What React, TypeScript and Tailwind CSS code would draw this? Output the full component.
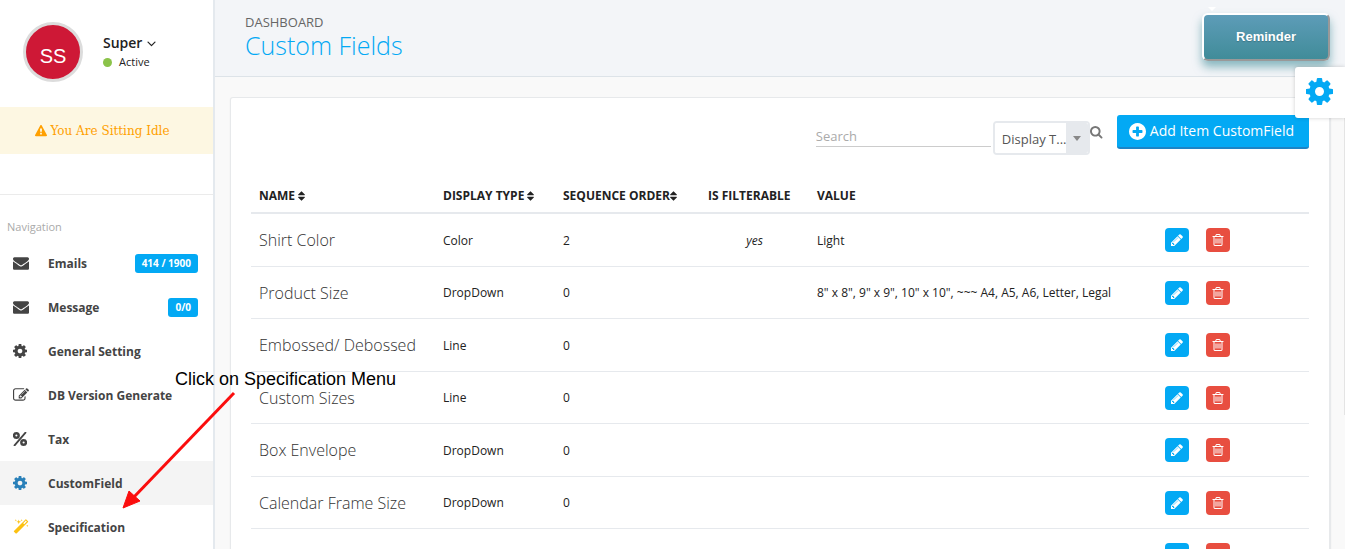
import type { ReactNode } from "react";

const paths = {
  cog: "M1152 896q0-106-75-181t-181-75-181 75-75 181 75 181 181 75 181-75 75-181zm512-109v222q0 12-8 23t-20 13l-185 28q-19 54-39 91 35 50 107 138 10 12 10 25t-9 23q-27 37-99 108t-94 71q-12 0-26-9l-138-108q-44 23-91 38-16 136-29 186-7 28-36 28h-222q-14 0-24.5-8.5t-11.5-21.5l-28-184q-49-16-90-37l-141 107q-10 9-25 9-14 0-25-11-126-114-165-168-7-10-7-23 0-12 8-23 15-21 51-66.5t54-70.5q-27-50-41-99l-183-27q-13-2-21-12.5t-8-23.5v-222q0-12 8-23t19-13l186-28q14-46 39-92-40-57-107-138-10-12-10-24 0-10 9-23 26-36 98.5-107.5t94.5-71.5q13 0 26 10l138 107q44-23 91-38 16-136 29-186 7-28 36-28h222q14 0 24.5 8.5t11.5 21.5l28 184q49 16 90 37l142-107q9-9 24-9 13 0 25 10 129 119 165 170 7 8 7 22 0 12-8 23-15 21-51 66.5t-54 70.5q26 50 41 98l183 28q13 2 21 12.5t8 23.5z",
  envelope:
    "M1792 710v794q0 66-47 113t-113 47h-1472q-66 0-113-47t-47-113v-794q44 49 101 87 362 246 497 345 57 42 92.5 65.5t94.5 48 110 24.5h2q51 0 110-24.5t94.5-48 92.5-65.5q170-123 498-345 57-39 100-87zm0-294q0 79-49 151t-122 123q-376 261-468 325-10 7-42.5 31t-54 38.5-52 32.5-57.5 27-50 9h-2q-23 0-50-9t-57.5-27-52-32.5-54-38.5-42.5-31q-91-64-262-182.5t-205-142.5q-62-42-117-115.5t-55-136.5q0-78 41.5-130t118.5-52h1472q65 0 112.5 47t47.5 113z",
  pencil:
    "M491 1536l91-91-235-235-91 91v107h128v128h107zm523-928q0-22-22-22-10 0-17 7l-542 542q-7 7-7 17 0 22 22 22 10 0 17-7l542-542q7-7 7-17zm-54-192l416 416-832 832h-416v-416zm683 96q0 53-37 90l-166 166-416-416 166-165q36-38 90-38 53 0 91 38l235 234q37 39 37 91z",
  trash:
    "M704 736v576q0 14-9 23t-23 9h-64q-14 0-23-9t-9-23v-576q0-14 9-23t23-9h64q14 0 23 9t9 23zm256 0v576q0 14-9 23t-23 9h-64q-14 0-23-9t-9-23v-576q0-14 9-23t23-9h64q14 0 23 9t9 23zm256 0v576q0 14-9 23t-23 9h-64q-14 0-23-9t-9-23v-576q0-14 9-23t23-9h64q14 0 23 9t9 23zm128 724v-948h-896v948q0 22 7 40.5t14.5 27 10.5 8.5h832q3 0 10.5-8.5t14.5-27 7-40.5zm-672-1076h448l-48-117q-7-9-17-11h-317q-10 2-17 11zm928 32v64q0 14-9 23t-23 9h-96v948q0 83-47 143.5t-113 60.5h-832q-66 0-113-58.5t-47-141.5v-952h-96q-14 0-23-9t-9-23v-64q0-14 9-23t23-9h309l70-167q15-37 54-63t79-26h320q40 0 79 26t54 63l70 167h309q14 0 23 9t9 23z",
  edit: "M888 1184l116-116-152-152-116 116v56h96v96h56zm440-720q-16-16-33 1l-350 350q-17 17-1 33t33-1l350-350q17-17 1-33zm80 594v190q0 119-84.5 203.5t-203.5 84.5h-832q-119 0-203.5-84.5t-84.5-203.5v-832q0-119 84.5-203.5t203.5-84.5h832q63 0 117 25 15 7 18 23 3 17-9 29l-49 49q-14 14-32 8-23-6-45-6h-832q-66 0-113 47t-47 113v832q0 66 47 113t113 47h832q66 0 113-47t47-113v-126q0-13 9-22l64-64q15-15 35-7t20 29zm-96-738l288 288-672 672h-288v-288zm444 132l-92 92-288-288 92-92q28-28 68-28t68 28l152 152q28 28 28 68t-28 68z",
  search:
    "M1216 832q0-185-131.5-316.5t-316.5-131.5-316.5 131.5-131.5 316.5 131.5 316.5 316.5 131.5 316.5-131.5 131.5-316.5zm512 832q0 52-38 90t-90 38q-54 0-90-38l-343-342q-179 124-399 124-143 0-273.5-55.5t-225-150-150-225-55.5-273.5 55.5-273.5 150-225 225-150 273.5-55.5 273.5 55.5 225 150 150 225 55.5 273.5q0 220-124 399l343 343q37 37 37 90z",
  plus: "M1344 960v-128q0-26-19-45t-45-19h-256v-256q0-26-19-45t-45-19h-128q-26 0-45 19t-19 45v256h-256q-26 0-45 19t-19 45v128q0 26 19 45t45 19h256v256q0 26 19 45t45 19h128q26 0 45-19t19-45v-256h256q26 0 45-19t19-45zm320-64q0 209-103 385.5t-279.5 279.5-385.5 103-385.5-103-279.5-279.5-103-385.5 103-385.5 279.5-279.5 385.5-103 385.5 103 279.5 279.5 103 385.5z",
  warning:
    "M1024 1375v-190q0-14-9.5-23.5t-22.5-9.5h-192q-13 0-22.5 9.5t-9.5 23.5v190q0 14 9.5 23.5t22.5 9.5h192q13 0 22.5-9.5t9.5-23.5zm-2-374l18-459q0-12-10-19-13-11-24-11h-220q-11 0-24 11-10 7-10 21l17 457q0 10 10 16.5t24 6.5h185q14 0 23.5-6.5t10.5-16.5zm-14-934l768 1408q35 63-2 126-17 29-46.5 46t-63.5 17h-1536q-34 0-63.5-17t-46.5-46q-37-63-2-126l768-1408q17-31 47-49t65-18 65 18 47 49z",
  angleDown:
    "M1395 736q0 13-10 23l-466 466q-10 10-23 10t-23-10l-466-466q-10-10-10-23t10-23l50-50q10-10 23-10t23 10l393 393 393-393q10-10 23-10t23 10l50 50q10 10 10 23z",
  sort: "M1408 1088q0 26-19 45l-448 448q-19 19-45 19t-45-19l-448-448q-19-19-19-45t19-45 45-19h896q26 0 45 19t19 45zm0-384q0 26-19 45t-45 19h-896q-26 0-45-19t-19-45 19-45l448-448q19-19 45-19t45 19l448 448q19 19 19 45z",
  magic:
    "M1254 581l293-293-107-107-293 293zm447-293q0 27-18 45l-1286 1286q-18 18-45 18t-45-18l-198-198q-18-18-18-45t18-45l1286-1286q18-18 45-18t45 18l198 198q18 18 18 45zm-1351-190l98 30-98 30-30 98-30-98-98-30 98-30 30-98zm350 162l196 60-196 60-60 196-60-196-196-60 196-60 60-196zm930 478l98 30-98 30-30 98-30-98-98-30 98-30 30-98zm-640-640l98 30-98 30-30 98-30-98-98-30 98-30 30-98z",
};

function Icon({
  name,
  className,
  viewBox = "0 0 1792 1792",
}: {
  name: keyof typeof paths;
  className: string;
  viewBox?: string;
}) {
  return (
    <svg viewBox={viewBox} fill="currentColor" className={className} aria-hidden="true">
      <path d={paths[name]} />
    </svg>
  );
}

function PercentIcon() {
  return (
    <svg viewBox="0 0 1536 1536" className="size-[14px]" fill="none" stroke="currentColor" aria-hidden="true">
      <circle cx="370" cy="390" r="250" strokeWidth="270" />
      <circle cx="1166" cy="1146" r="250" strokeWidth="270" />
      <path d="M1370 70L170 1470" strokeWidth="200" strokeLinecap="round" />
    </svg>
  );
}

type NavItem = { label: string; icon: ReactNode; badge?: string; active?: boolean };

const CROPPED = "128 128 1536 1536";

const navItems: NavItem[] = [
  { label: "Emails", icon: <Icon name="envelope" className="size-4" />, badge: "414 / 1900" },
  { label: "Message", icon: <Icon name="envelope" className="size-4" />, badge: "0/0" },
  { label: "General Setting", icon: <Icon name="cog" viewBox={CROPPED} className="size-[14px]" /> },
  { label: "DB Version Generate", icon: <Icon name="edit" className="size-4" /> },
  { label: "Tax", icon: <PercentIcon /> },
  {
    label: "CustomField",
    icon: <Icon name="cog" viewBox={CROPPED} className="size-[14px] text-[#2980b9]" />,
    active: true,
  },
  { label: "Specification", icon: <Icon name="magic" className="size-4 text-[#fcc111]" /> },
];

type Field = { name: string; type: string; order: string; filterable?: string; value?: string };

const fields: Field[] = [
  { name: "Shirt Color", type: "Color", order: "2", filterable: "yes", value: "Light" },
  {
    name: "Product Size",
    type: "DropDown",
    order: "0",
    value: '8" x 8", 9" x 9", 10" x 10", ~~~ A4, A5, A6, Letter, Legal',
  },
  { name: "Embossed/ Debossed", type: "Line", order: "0" },
  { name: "Custom Sizes", type: "Line", order: "0" },
  { name: "Box Envelope", type: "DropDown", order: "0" },
  { name: "Calendar Frame Size", type: "DropDown", order: "0" },
  { name: "", type: "", order: "" },
];

function Sidebar() {
  return (
    <aside className="flex w-[215px] shrink-0 flex-col border-r-2 border-[#e4e9ee] bg-white">
      <div className="flex h-[107px] items-start gap-5 px-[23px] pt-[22px]">
        <div className="flex size-[60px] shrink-0 items-center justify-center rounded-full border-[3px] border-[#dcdcdc] bg-[#ce1836] pt-2 font-['Liberation_Sans',sans-serif] text-xl text-white">
          SS
        </div>
        <div className="pt-[11px]">
          <button type="button" className="flex items-center gap-0.5 text-sm leading-5 font-semibold text-[#222]">
            Super
            <Icon name="angleDown" className="size-[15px]" />
          </button>
          <div className="flex items-center gap-[7px] pt-px text-[11px] leading-4 text-[#222]">
            <span className="size-[9px] rounded-full bg-[#8bc34a]" />
            Active
          </div>
        </div>
      </div>
      <div className="flex h-[47px] shrink-0 items-center justify-center gap-[3px] bg-[#fdf7e2] pr-2 font-['DejaVu_Serif',serif] text-xs text-[#ffa000]">
        <Icon name="warning" className="size-3" />
        You Are Sitting Idle
      </div>
      <div className="h-[41px] shrink-0 border-b border-[#ebebeb]" />
      <nav aria-label="Navigation">
        <h2 className="h-[46px] pt-6 pl-[7px] text-[11px] leading-4 text-[#aaa]">Navigation</h2>
        <ul>
          {navItems.map((item) => (
            <li key={item.label}>
              <a
                href="#"
                className={
                  item.active
                    ? "flex h-11 items-center bg-[#f4f4f4] pr-[15px] pl-[13px] text-xs font-bold text-[#444]"
                    : "flex h-11 items-center pr-[15px] pl-[13px] text-xs font-bold text-[#444]"
                }
              >
                <span className="w-[35px] shrink-0">{item.icon}</span>
                <span className="grow pt-0.5 whitespace-nowrap">{item.label}</span>
                {item.badge && (
                  <span className="rounded-[3px] bg-[#03a9f4] px-[7px] text-[10px] leading-[19px] text-white">
                    {item.badge}
                  </span>
                )}
              </a>
            </li>
          ))}
        </ul>
      </nav>
    </aside>
  );
}

function Toolbar() {
  return (
    <div className="flex h-[58px] items-start justify-end">
      <input
        type="text"
        aria-label="Search"
        placeholder="Search"
        className="mt-2.5 h-[22px] w-[175px] border-b border-[#ccc] text-[13px] text-[#444] outline-none placeholder:text-[#aaa]"
      />
      <div className="relative mt-[6px] ml-[2px] h-[34px] w-[97px] overflow-hidden rounded border-2 border-[#e6e9ed]">
        <select
          aria-label="Display type"
          className="h-full w-full appearance-none bg-white pt-1 pl-[7px] text-[13px] text-[#555] outline-none"
        >
          <option>Display T...</option>
        </select>
        <span className="pointer-events-none absolute inset-y-0 right-0 flex w-[22px] items-center justify-center bg-[#e6e9ed]">
          <svg viewBox="0 0 8 5" className="h-[5px] w-2 fill-[#888]" aria-hidden="true">
            <path d="M0 0h8L4 5z" />
          </svg>
        </span>
      </div>
      <button type="button" aria-label="Search" className="mt-[11px] text-[#777]">
        <Icon name="search" viewBox="64 128 1728 1728" className="size-[13px]" />
      </button>
      <button
        type="button"
        className="ml-[14px] flex h-[34px] items-center gap-1 rounded-[3px] border-b-2 border-[#1c84c6] bg-[#03a9f4] pr-[15px] pl-3 text-sm text-white"
      >
        <Icon name="plus" viewBox={CROPPED} className="size-[17px]" />
        Add Item CustomField
      </button>
    </div>
  );
}

function SortIcon() {
  return <Icon name="sort" viewBox="384 0 1024 1792" className="inline h-3 w-[7px]" />;
}

function FieldsTable() {
  return (
    <table className="w-full table-fixed border-collapse text-left text-xs text-[#222]">
      <colgroup>
        <col className="w-[184px]" />
        <col className="w-[120px]" />
        <col className="w-[145px]" />
        <col className="w-[109px]" />
        <col />
        <col className="w-[152px]" />
      </colgroup>
      <thead>
        <tr className="h-9 border-b-2 border-[#e6e9ed] whitespace-nowrap">
          <th className="px-2 pt-0.5">
            NAME <SortIcon />
          </th>
          <th className="px-2 pt-0.5">
            DISPLAY TYPE <SortIcon />
          </th>
          <th className="px-2 pt-0.5">
            SEQUENCE ORDER
            <SortIcon />
          </th>
          <th className="px-2 pt-0.5">IS FILTERABLE</th>
          <th className="px-2 pt-0.5">VALUE</th>
          <th aria-label="Actions" />
        </tr>
      </thead>
      <tbody>
        {fields.map((f, i) => (
          <tr key={i} className="border-b border-[#e6e9ed] odd:h-[53px] even:h-[52px]">
            <td className="px-2 pt-px text-base font-light whitespace-nowrap text-[#333]">{f.name}</td>
            <td className="px-2 pt-0.5">{f.type}</td>
            <td className="px-2 pt-0.5">{f.order}</td>
            <td className="px-2 pt-0.5 text-center italic">{f.filterable}</td>
            <td className="px-2 pt-0.5 whitespace-nowrap">{f.value}</td>
            <td className="px-2 pt-px">
              <div className="flex gap-[17px]">
                <button
                  type="button"
                  aria-label="Edit"
                  className="flex size-6 items-center justify-center rounded bg-[#03a9f4] text-white"
                >
                  <Icon name="pencil" className="size-[14px]" />
                </button>
                <button
                  type="button"
                  aria-label="Delete"
                  className="flex size-6 items-center justify-center rounded bg-[#e84e40] text-white"
                >
                  <Icon name="trash" className="size-[14px]" />
                </button>
              </div>
            </td>
          </tr>
        ))}
      </tbody>
    </table>
  );
}

export default function App() {
  return (
    <div className="relative flex h-screen overflow-hidden bg-[#f9f9f9] font-['Open_Sans',sans-serif]">
      <Sidebar />
      <div className="flex min-w-0 grow flex-col">
        <header className="flex h-[77px] shrink-0 items-start justify-between border-b border-[#dde3e8] bg-[#f3f5f8] pr-[15px] pl-[30px]">
          <div className="pt-3.5">
            <p className="text-[13px] leading-4 text-[#666]">DASHBOARD</p>
            <h1 className="text-[25px] leading-[30px] font-light text-[#03a9f4]">Custom Fields</h1>
          </div>
          <div className="relative pt-[13px]">
            <svg viewBox="0 0 8 4" className="absolute top-[7px] left-[6px] h-1 w-2 fill-white" aria-hidden="true">
              <path d="M0 0h8L4 4z" />
            </svg>
            <button
              type="button"
              className="h-12 w-[128px] rounded-md border-2 border-t-white border-r-[#999] border-b-[#999] border-l-white bg-linear-to-b from-[#5d9cb8] to-[#408c99] font-['Liberation_Sans',sans-serif] text-[13px] font-bold text-white shadow-[0_6px_10px_#408c9999] text-shadow-xs"
            >
              Reminder
            </button>
          </div>
        </header>
        <main className="pt-5 pr-[14px] pl-[15px]">
          <section className="rounded-[3px] border border-r-2 border-[#e7e9eb] bg-white px-5 pt-[17px] shadow-xs">
            <Toolbar />
            <div className="pt-1">
              <FieldsTable />
            </div>
          </section>
        </main>
      </div>

      <div className="absolute top-[67px] right-0 h-[348px] w-px bg-[#e4e4e4]" />
      <button
        type="button"
        aria-label="Settings"
        className="absolute top-[67px] right-0 flex h-[51px] w-[50px] items-center justify-center rounded-l-[3px] bg-white pr-0.5 pb-0.5 text-[#03a9f4] shadow-[0_0_4px_#0000002e]"
      >
        <Icon name="cog" viewBox={CROPPED} className="size-[27px]" />
      </button>

      <div className="pointer-events-none absolute top-[368px] left-[175px] flex flex-col font-['Liberation_Sans',sans-serif] text-lg leading-[22px] whitespace-nowrap text-black">
        Click on Specification Menu
      </div>
      <svg
        viewBox="0 0 120 120"
        className="pointer-events-none absolute top-[390px] left-[120px] size-[120px]"
        aria-hidden="true"
      >
        <path d="M114 3L13 108" stroke="#fb0d0d" strokeWidth="3" />
        <path d="M3 118L9 101L20 111z" fill="#fb0d0d" stroke="#fb0d0d" />
      </svg>
    </div>
  );
}
